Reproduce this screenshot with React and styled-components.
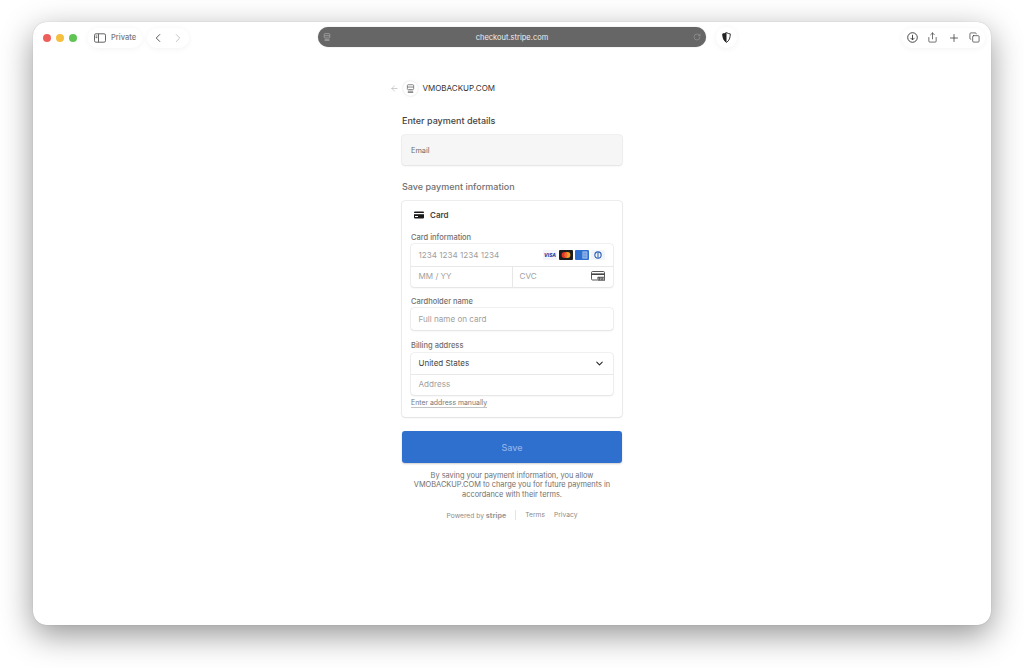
import styled, { createGlobalStyle } from "styled-components";
import { ChevronLeft, ChevronRight, Plus, Copy, Share, ArrowLeft, ChevronDown, RotateCw } from "lucide-react";

const GlobalStyle = createGlobalStyle`
  html, body {
    margin: 0;
    height: 668px;
    overflow: hidden;
    background: #fff;
    font-family: Inter, "Liberation Sans", sans-serif;
  }
  * { box-sizing: border-box; }
`;

const StoreIcon = ({ color = "#777", size = 9 }) => (
  <svg width={size} height={size} viewBox="0 0 10 10" fill="none" stroke={color} strokeWidth="1">
    <rect x="1.5" y="0.8" width="7" height="5.4" rx="1" />
    <path d="M1.5 3.4h7M2 8h6M2 9.4h6" />
  </svg>
);

const SidebarIcon = () => (
  <svg width="12" height="10" viewBox="0 0 12 10" fill="none" stroke="#555" strokeWidth="0.9">
    <rect x="0.5" y="0.8" width="11" height="8.4" rx="1.4" />
    <path d="M4.5 0.8v8.4M1.6 3h1.7M1.6 4.6h1.7" />
  </svg>
);

const ShieldIcon = () => (
  <svg width="9" height="11" viewBox="0 0 9 11">
    <path d="M4.5 0.6C3.3 1.4 2 1.8 0.7 1.9c0 3.8 1 6.8 3.8 8.5 2.8-1.7 3.8-4.7 3.8-8.5C7 1.8 5.7 1.4 4.5 0.6Z" fill="#fff" stroke="#222" strokeWidth="0.9" />
    <path d="M4.5 0.6C3.3 1.4 2 1.8 0.7 1.9c0 3.8 1 6.8 3.8 8.5Z" fill="#222" />
  </svg>
);

const DownloadIcon = () => (
  <svg width="11" height="11" viewBox="0 0 11 11" fill="none" stroke="#333" strokeWidth="0.9">
    <circle cx="5.5" cy="5.5" r="4.8" />
    <path d="M5.5 2.8v5M3.5 5.9l2 2 2-2" />
  </svg>
);

const CardGlyph = () => (
  <svg width="10" height="8" viewBox="0 0 10 8">
    <rect x="0" y="0.4" width="10" height="7.2" rx="1" fill="#1a1a1a" />
    <rect x="0" y="2" width="10" height="1.2" fill="#fff" />
    <rect x="1" y="5" width="3" height="1" fill="#fff" />
  </svg>
);

const VisaLogo = () => (
  <svg width="14" height="10" viewBox="0 0 14 10">
    <rect width="14" height="10" rx="1" fill="#f3f5fb" />
    <text x="7" y="6.9" textAnchor="middle" fontSize="4.8" fontWeight="800" fontStyle="italic" fill="#2a3f9d" fontFamily="Inter, sans-serif">VISA</text>
  </svg>
);

const MastercardLogo = () => (
  <svg width="14" height="10" viewBox="0 0 14 10">
    <rect width="14" height="10" rx="1" fill="#1d1d1d" />
    <circle cx="5.5" cy="5" r="2.9" fill="#e4342a" />
    <circle cx="8.5" cy="5" r="2.9" fill="#f3a02c" />
    <path d="M7 2.5a2.9 2.9 0 0 1 0 5a2.9 2.9 0 0 1 0-5Z" fill="#f2682a" />
  </svg>
);

const AmexLogo = () => (
  <svg width="14" height="10" viewBox="0 0 14 10">
    <rect width="14" height="10" rx="1" fill="#2f6fd0" />
    <rect x="7.4" y="1.4" width="5" height="7.2" fill="#9dbde9" />
    <path d="M8.2 3.2h3.4M8.2 5h3.4M8.2 6.8h3.4" stroke="#2f6fd0" strokeWidth="0.6" />
  </svg>
);

const DinersLogo = () => (
  <svg width="14" height="10" viewBox="0 0 14 10">
    <rect width="14" height="10" rx="1.5" fill="#f1f4fa" />
    <circle cx="7" cy="5" r="3.7" fill="#2a5db0" />
    <circle cx="7" cy="5" r="2.6" fill="#f1f4fa" />
    <rect x="6.5" y="2.4" width="1" height="5.2" fill="#2a5db0" />
  </svg>
);

const CvcIcon = () => (
  <svg width="14" height="10" viewBox="0 0 14 10" fill="none">
    <path d="M6 9H1.6A1.1 1.1 0 0 1 .5 7.9V1.6A1.1 1.1 0 0 1 1.6.5h10.8a1.1 1.1 0 0 1 1.1 1.1V6" stroke="#444" strokeWidth="0.9" />
    <rect x="0.5" y="2.4" width="13" height="1.6" fill="#444" />
    <rect x="6.4" y="5.8" width="7.6" height="4" rx="0.6" fill="#555" />
    <path d="M7.6 6.9v1.8M9.3 6.9h1v.9h-1v.9h1M11.6 6.9h1.1v1.8h-1.1M11.6 7.8h1.1" stroke="#fff" strokeWidth="0.4" />
  </svg>
);

export default function App() {
  return (
    <>
      <GlobalStyle />
      <Page>
        <BrowserWindow>
          <Toolbar>
            <ToolbarLeft>
              <Lights>
                <Light $color="#ee5f5b" />
                <Light $color="#f5bf40" />
                <Light $color="#5fc454" />
              </Lights>
              <PrivatePill>
                <SidebarIcon />
                <span>Private</span>
              </PrivatePill>
              <NavPill>
                <ChevronLeft size={14} color="#444" strokeWidth={1.5} />
                <ChevronRight size={14} color="#bbb" strokeWidth={1.5} />
              </NavPill>
            </ToolbarLeft>
            <UrlBar>
              <StoreIcon color="#a5a5a5" size={8} />
              <UrlText>checkout.stripe.com</UrlText>
              <RotateCw size={8} color="#a5a5a5" strokeWidth={1.5} />
            </UrlBar>
            <ToolbarRight>
              <RoundButton>
                <ShieldIcon />
              </RoundButton>
              <ActionPill>
                <DownloadIcon />
                <Share size={11} color="#333" strokeWidth={1.5} />
                <Plus size={12} color="#333" strokeWidth={1.5} />
                <Copy size={11} color="#333" strokeWidth={1.5} />
              </ActionPill>
            </ToolbarRight>
          </Toolbar>

          <Checkout>
            <Merchant>
              <ArrowLeft size={9} color="#aaa" strokeWidth={1.5} />
              <MerchantBadge>
                <StoreIcon />
              </MerchantBadge>
              <MerchantName>VMOBACKUP.COM</MerchantName>
            </Merchant>

            <Form>
              <Heading>Enter payment details</Heading>
              <EmailField>Email</EmailField>
              <SubHeading>Save payment information</SubHeading>

              <CardPanel>
                <CardTitle>
                  <CardGlyph />
                  <span>Card</span>
                </CardTitle>

                <FieldLabel $top={2.5}>Card information</FieldLabel>
                <InputGroup>
                  <InputRow>
                    <Placeholder>1234 1234 1234 1234</Placeholder>
                    <Logos>
                      <VisaLogo />
                      <MastercardLogo />
                      <AmexLogo />
                      <DinersLogo />
                    </Logos>
                  </InputRow>
                  <SplitRow>
                    <SplitCell>
                      <Placeholder>MM / YY</Placeholder>
                    </SplitCell>
                    <SplitCell>
                      <Placeholder>CVC</Placeholder>
                      <CvcIcon />
                    </SplitCell>
                  </SplitRow>
                </InputGroup>

                <FieldLabel $top={8.5}>Cardholder name</FieldLabel>
                <InputGroup>
                  <InputRow>
                    <Placeholder>Full name on card</Placeholder>
                  </InputRow>
                </InputGroup>

                <FieldLabel $top={10.5}>Billing address</FieldLabel>
                <InputGroup>
                  <InputRow>
                    <Value>United States</Value>
                    <ChevronDown size={11} color="#222" strokeWidth={2.2} />
                  </InputRow>
                  <InputRow $divided>
                    <Placeholder>Address</Placeholder>
                  </InputRow>
                </InputGroup>
                <ManualLink>Enter address manually</ManualLink>
              </CardPanel>

              <SaveButton>Save</SaveButton>
              <Terms>
                By saving your payment information, you allow VMOBACKUP.COM to charge you for future payments in accordance with their terms.
              </Terms>
              <Footer>
                <PoweredBy>
                  Powered by <b>stripe</b>
                </PoweredBy>
                <FooterDivider />
                <FooterLink>Terms</FooterLink>
                <FooterLink>Privacy</FooterLink>
              </Footer>
            </Form>
          </Checkout>
        </BrowserWindow>
      </Page>
    </>
  );
}

const Page = styled.div`
  height: 668px;
  padding: 22px 33px 43px;
`;

const BrowserWindow = styled.div`
  height: 603px;
  background: #fff;
  border-radius: 14px;
  box-shadow: 0 0 1px rgba(0, 0, 0, 0.25), 0 10px 32px rgba(0, 0, 0, 0.42);
  display: flex;
  flex-direction: column;
`;

const Toolbar = styled.div`
  display: grid;
  grid-template-columns: 285px 388px 1fr;
  padding-top: 5px;
  height: 25px;
`;

const ToolbarLeft = styled.div`
  display: flex;
  align-items: center;
  padding-left: 10px;
`;

const Lights = styled.div`
  display: flex;
  gap: 5px;
  margin-right: 11px;
`;

const Light = styled.span`
  width: 8px;
  height: 8px;
  border-radius: 50%;
  background: ${(props) => props.$color};
`;

const PrivatePill = styled.div`
  width: 54px;
  height: 20px;
  border-radius: 10px;
  display: flex;
  align-items: center;
  gap: 5px;
  padding-left: 6px;
  font-size: 7.5px;
  font-weight: 500;
  color: #777;
  box-shadow: 0 1px 6px rgba(0, 0, 0, 0.05);
`;

const NavPill = styled.div`
  width: 42px;
  height: 20px;
  margin-left: 5px;
  border-radius: 10px;
  display: flex;
  align-items: center;
  justify-content: space-between;
  padding: 0 4px;
  box-shadow: 0 1px 6px rgba(0, 0, 0, 0.05);
`;

const UrlBar = styled.div`
  height: 20px;
  border-radius: 10px;
  background: #666;
  box-shadow: 0 0 1px rgba(0, 0, 0, 0.4);
  display: flex;
  align-items: center;
  justify-content: space-between;
  padding: 0 5px;
`;

const UrlText = styled.span`
  font-size: 7.5px;
  font-weight: 400;
  color: #eee;
`;

const ToolbarRight = styled.div`
  display: flex;
  align-items: center;
  justify-content: space-between;
  padding: 0 6px 0 10px;
`;

const RoundButton = styled.div`
  width: 21px;
  height: 21px;
  border-radius: 50%;
  display: flex;
  align-items: center;
  justify-content: center;
  box-shadow: 0 1px 6px rgba(0, 0, 0, 0.06);
`;

const ActionPill = styled.div`
  width: 83px;
  height: 20px;
  border-radius: 10px;
  display: flex;
  align-items: center;
  justify-content: space-between;
  padding: 0 5px;
  box-shadow: 0 1px 6px rgba(0, 0, 0, 0.05);
`;

const Checkout = styled.div`
  flex: 1;
  display: flex;
  flex-direction: column;
  align-items: center;
  padding-top: 31px;
`;

const Merchant = styled.div`
  width: 245px;
  height: 20px;
  display: flex;
  align-items: center;
`;

const MerchantBadge = styled.div`
  width: 15px;
  height: 15px;
  margin-left: 4px;
  border-radius: 50%;
  display: flex;
  align-items: center;
  justify-content: center;
  box-shadow: 0 0 2px rgba(0, 0, 0, 0.18);
`;

const MerchantName = styled.span`
  margin-left: 5px;
  font-size: 8px;
  font-weight: 400;
  color: #333;
`;

const Form = styled.div`
  width: 220px;
  display: flex;
  flex-direction: column;
`;

const Heading = styled.div`
  margin-top: 16px;
  height: 14px;
  line-height: 14px;
  font-size: 9px;
  font-weight: 500;
  color: #444;
`;

const EmailField = styled.div`
  margin-top: 7px;
  height: 30px;
  padding-left: 9px;
  display: flex;
  align-items: center;
  font-size: 7.3px;
  color: #6a6a6a;
  background: #f6f6f6;
  border-radius: 3px;
  box-shadow: 0 0 0 0.5px #e2e2e2, 0 1px 2px rgba(0, 0, 0, 0.1);
`;

const SubHeading = styled.div`
  margin-top: 15px;
  height: 14px;
  line-height: 14px;
  font-size: 9px;
  font-weight: 500;
  color: #707070;
`;

const CardPanel = styled.div`
  margin-top: 7px;
  height: 216px;
  padding: 0 9px;
  border-radius: 3px;
  box-shadow: 0 0 0 0.5px #dcdcdc, 0 1px 2px rgba(0, 0, 0, 0.08);
`;

const CardTitle = styled.div`
  height: 28px;
  display: flex;
  align-items: center;
  gap: 6px;
  padding-left: 3px;
  font-size: 8px;
  font-weight: 600;
  color: #444;
`;

const FieldLabel = styled.div`
  margin-top: ${(props) => props.$top}px;
  height: 11px;
  line-height: 11px;
  margin-bottom: 1.5px;
  font-size: 7.5px;
  font-weight: 500;
  color: #707070;
`;

const InputGroup = styled.div`
  border-radius: 3px;
  overflow: hidden;
  box-shadow: 0 0 0 0.5px #e2e2e2, 0 1px 2px rgba(0, 0, 0, 0.1);
`;

const InputRow = styled.div`
  height: ${(props) => (props.$divided ? 20.5 : 21.5)}px;
  padding: 0 8px ${(props) => (props.$divided ? 1 : 0)}px 7.5px;
  display: flex;
  align-items: center;
  justify-content: space-between;
  border-top: ${(props) => (props.$divided ? "1px solid #e8e8e8" : "none")};
`;

const SplitRow = styled.div`
  height: 21.5px;
  display: grid;
  grid-template-columns: 1fr 1fr;
  border-top: 1px solid #e8e8e8;
`;

const SplitCell = styled.div`
  padding: 0 8px 1px 7.5px;
  display: flex;
  align-items: center;
  justify-content: space-between;
  & + & {
    border-left: 1px solid #e8e8e8;
    padding-left: 6.5px;
  }
`;

const Placeholder = styled.span`
  font-size: 8.1px;
  color: #a0a0a0;
`;

const Value = styled.span`
  font-size: 8px;
  font-weight: 400;
  color: #444;
`;

const Logos = styled.div`
  display: flex;
  gap: 2px;
  line-height: 0;
`;

const ManualLink = styled.div`
  margin-top: 3.5px;
  width: fit-content;
  font-size: 6.9px;
  line-height: 9px;
  color: #777;
  border-bottom: 1px solid #c4c4c4;
`;

const SaveButton = styled.div`
  margin-top: 14px;
  height: 32px;
  display: flex;
  align-items: center;
  justify-content: center;
  border-radius: 3px;
  background: #2f6fce;
  box-shadow: 0 1px 2px rgba(0, 0, 0, 0.2);
  color: #8fb3e8;
  font-size: 9px;
  font-weight: 500;
`;

const Terms = styled.div`
  margin-top: 7.5px;
  padding: 0 4px;
  text-align: center;
  font-size: 7.4px;
  line-height: 9.6px;
  color: #707070;
`;

const Footer = styled.div`
  margin-top: 10px;
  height: 12px;
  display: flex;
  align-items: center;
  justify-content: center;
  font-size: 6.7px;
  color: #8c8c8c;
`;

const PoweredBy = styled.span`
  b {
    font-size: 7.2px;
    font-weight: 700;
    color: #999;
  }
`;

const FooterDivider = styled.span`
  width: 1px;
  height: 10px;
  margin: 0 9px;
  background: #e4e4e4;
`;

const FooterLink = styled.span`
  & + & {
    margin-left: 9px;
  }
`;
